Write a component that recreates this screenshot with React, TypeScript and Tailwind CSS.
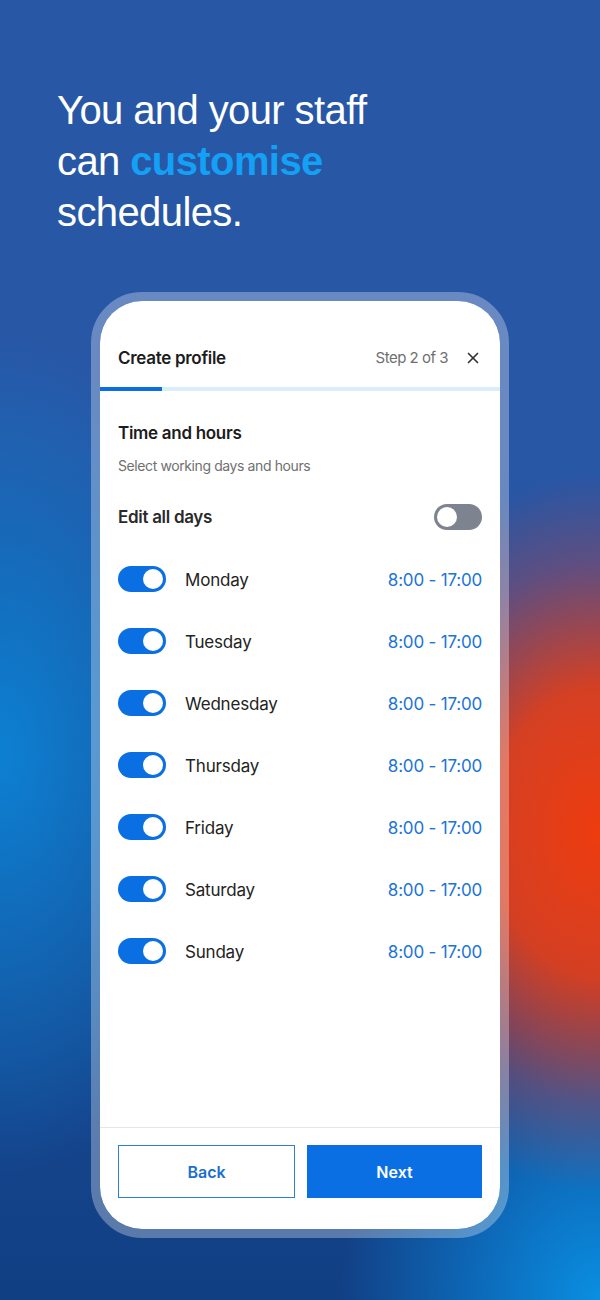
import React from "react";
import { X } from "lucide-react";

const days = ["Monday", "Tuesday", "Wednesday", "Thursday", "Friday", "Saturday", "Sunday"];

const Toggle = ({ on }: { on: boolean }) => (
  <div
    className={
      on
        ? "flex h-[26px] w-[48px] shrink-0 items-center justify-end rounded-full bg-[#0a6fe3] px-[3px]"
        : "flex h-[26px] w-[48px] shrink-0 items-center justify-start rounded-full bg-[#7d848f] px-[3px]"
    }
  >
    <div className="h-[20px] w-[20px] rounded-full bg-white" />
  </div>
);

const App = () => {
  return (
    <div className="flex h-[1300px] w-[600px] flex-col overflow-hidden bg-[radial-gradient(270px_360px_at_100%_64%,#ee3c0f_0%,rgba(232,62,22,0.9)_40%,rgba(180,70,80,0.4)_75%,transparent_100%),radial-gradient(260px_300px_at_100%_100%,#0a8fe2_0%,rgba(10,130,215,0.6)_50%,transparent_100%),radial-gradient(240px_420px_at_0%_58%,#0d80d2_0%,rgba(13,120,200,0.6)_50%,transparent_100%),linear-gradient(to_bottom,#2857a6_0%,#2857a6_35%,#1d4f9c_60%,#113f84_100%)] font-['Inter',sans-serif]">
      <h1 className="pl-[57px] pt-[85px] font-['Liberation_Sans',Arial,sans-serif] text-[40px] leading-[51px] font-normal tracking-[-0.6px] text-white">
        You and your staff
        <br />
        can <span className="font-bold text-[#13a0f5]">customise</span>
        <br />
        schedules.
      </h1>

      <div className="mx-auto mt-[54px] rounded-[51px] border-[9px] border-white/30">
        <div className="flex h-[928px] w-[400px] flex-col overflow-hidden rounded-[42px] bg-white">
          <div className="flex items-center px-[18px] pt-[46px] pb-[18px]">
            <span className="flex-1 text-[17px] leading-[22px] font-semibold tracking-[-0.3px] text-[#1c1c1c]">
              Create profile
            </span>
            <span className="text-[15px] leading-[22px] tracking-[-0.5px] text-[#6f6f6f]">Step 2 of 3</span>
            <X className="ml-[16px] h-[18px] w-[18px] text-[#333]" strokeWidth={2.2} />
          </div>

          <div className="flex h-[4px] bg-[#d8eefb]">
            <div className="w-[62px] bg-[#0a6fe3]" />
          </div>

          <div className="flex flex-1 flex-col px-[18px]">
            <p className="mt-[31px] text-[17px] leading-[22px] font-semibold tracking-[-0.3px] text-[#1c1c1c]">
              Time and hours
            </p>
            <p className="mt-[12px] text-[14px] leading-[20px] tracking-[-0.4px] text-[#707070]">
              Select working days and hours
            </p>

            <div className="mt-[28px] flex h-[26px] items-center justify-between">
              <span className="text-[17px] leading-[22px] font-semibold tracking-[-0.3px] text-[#2a2a2a]">
                Edit all days
              </span>
              <Toggle on={false} />
            </div>

            <div className="mt-[18px] flex flex-col">
              {days.map((d) => (
                <div key={d} className="flex h-[62px] items-center">
                  <Toggle on />
                  <span className="ml-[19px] mt-[3px] flex-1 text-[17px] tracking-[-0.2px] text-[#232323]">{d}</span>
                  <span className="mt-[3px] text-[17px] tracking-[-0.2px] text-[#1b74d8]">8:00 - 17:00</span>
                </div>
              ))}
            </div>
          </div>

          <div className="flex gap-[12px] border-t border-[#e6e6e6] px-[18px] pt-[17px] pb-[31px]">
            <button className="flex h-[53px] flex-1 items-center justify-center border-[1.5px] border-[#2a7fd9] text-[16px] font-semibold text-[#1b6fd0]">
              Back
            </button>
            <button className="flex h-[53px] flex-1 items-center justify-center bg-[#0a6fe3] text-[16px] font-semibold text-white">
              Next
            </button>
          </div>
        </div>
      </div>
    </div>
  );
};

export default App;
